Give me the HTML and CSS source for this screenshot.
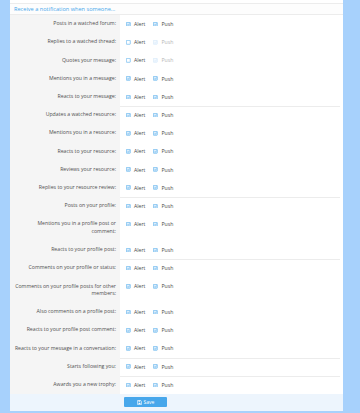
FILE: index.html
```html
<!DOCTYPE html>
<html lang="en">
<head>
    <meta charset="UTF-8">
    <meta name="viewport" content="width=device-width, initial-scale=1.0">
    <title>Preferences</title>
    <link rel="stylesheet" href="styles.css">
</head>
<body>
    <div class="panel">
        <div class="panelTop"></div>
        <h3 class="blockHeader">Receive a notification when someone...</h3>

        <div class="formRows" id="rows"></div>

        <div class="formSubmit">
            <button type="button" class="saveButton">
                <svg class="saveIcon" viewBox="0 0 10 10" width="5" height="5">
                    <path d="M1 1h6.5L9 2.5V9H1z" fill="none" stroke="#fff" stroke-width="1.2"/>
                    <rect x="3" y="1" width="3.5" height="2.4" fill="#fff"/>
                    <rect x="3" y="5.5" width="4" height="2.5" fill="#fff"/>
                </svg>
                Save
            </button>
        </div>
    </div>

    <script>
        // label, alert state, push state, separated (line above)
        const prefs = [
            ['Posts in a watched forum:', 'on', 'on', false],
            ['Replies to a watched thread:', 'off', 'dis', false],
            ['Quotes your message:', 'off', 'dis', false],
            ['Mentions you in a message:', 'on', 'on', false],
            ['Reacts to your message:', 'on', 'on', false],
            ['Updates a watched resource:', 'on', 'on', true],
            ['Mentions you in a resource:', 'on', 'on', false],
            ['Reacts to your resource:', 'on', 'on', false],
            ['Reviews your resource:', 'on', 'on', false],
            ['Replies to your resource review:', 'on', 'on', false],
            ['Posts on your profile:', 'on', 'on', true],
            ['Mentions you in a profile post or comment:', 'on', 'on', false],
            ['Reacts to your profile post:', 'on', 'on', false],
            ['Comments on your profile or status:', 'on', 'on', true],
            ['Comments on your profile posts for other members:', 'on', 'on', false],
            ['Also comments on a profile post:', 'on', 'on', false],
            ['Reacts to your profile post comment:', 'on', 'on', false],
            ['Reacts to your message in a conversation:', 'on', 'on', false],
            ['Starts following you:', 'on', 'on', true],
            ['Awards you a new trophy:', 'on', 'on', true]
        ];

        function box(state, text) {
            const on = state !== 'off';
            const tick = on ? '<path d="M1.6 3.1l1 1 1.9-2.2" fill="none" stroke="currentColor" stroke-width="0.7"/>' : '';
            return `<label class="check check--${state}">
                <svg viewBox="0 0 5.6 5.6" width="4.6" height="4.6"><rect x="0.4" y="0.4" width="4.8" height="4.8" rx="0.5" class="${on ? 'boxFill' : ''}" fill="#fff" stroke="currentColor" stroke-width="0.7"/>${tick}</svg>
                <span>${text}</span></label>`;
        }

        document.getElementById('rows').innerHTML = prefs.map(p => `
            <dl class="formRow${p[3] ? ' formRow--separated' : ''}">
                <dt>${p[0]}</dt>
                <dd>${box(p[1], 'Alert')}${box(p[2], 'Push')}</dd>
            </dl>`).join('');
    </script>
</body>
</html>
```

FILE: styles.css
```css
body {
    margin: 0;
    background-color: #a7d1fc;
    font-family: "Open Sans", "Noto Sans", sans-serif;
    height: 413px;
    overflow: hidden;
}

.panel {
    margin-left: 10px;
    width: 333px;
    background-color: #fff;
}

.panelTop {
    height: 3px;
    border-bottom: 1px solid #ececec;
}

.blockHeader {
    margin: 0;
    padding: 0 4px;
    height: 10px;
    line-height: 10px;
    font-size: 5.6px;
    font-weight: normal;
    color: #47a7eb;
    background-color: #fdfdfd;
    border-bottom: 1px solid #ececec;
}

.formRow {
    display: grid;
    grid-template-columns: 110px 1fr;
    margin: 0;
}

.formRow dt {
    background-color: #f5f5f5;
    padding: 5.3px 4px 5.3px 3px;
    line-height: 7.6px;
    font-size: 5.2px;
    color: #505050;
    text-align: right;
}

.formRow dd {
    margin: 0 3px 0 0;
    padding: 5.3px 6px;
    display: flex;
    align-items: flex-start;
    gap: 8px;
}

.formRow--separated dd {
    box-shadow: inset 0 1px 0 #ececec; /* line above, right column only */
}

.check {
    display: flex;
    align-items: center;
    gap: 3.4px;
    height: 7.6px;
    font-size: 5.2px;
    color: #47a7eb;
}

.check .boxFill {
    fill: #dcedfb;
}

.check span {
    color: #4a4a4a;
}

.check--dis {
    color: #cfe6f9;
}

.check--dis .boxFill {
    fill: #f3f9fe;
}

.check--dis span {
    color: #b5b5b5;
}

.formSubmit {
    background-color: #edf5fd;
    height: 17px;
    padding-left: 114px;
    display: flex;
    align-items: center;
}

.saveButton {
    width: 43px;
    height: 10px;
    padding: 0;
    border: none;
    border-radius: 1px;
    background-color: #47a7eb;
    color: #fff;
    font-family: "Open Sans", "Noto Sans", sans-serif;
    font-size: 5px;
    display: flex;
    align-items: center;
    justify-content: center;
    gap: 2px;
}

.saveIcon {
    display: block;
}
```
